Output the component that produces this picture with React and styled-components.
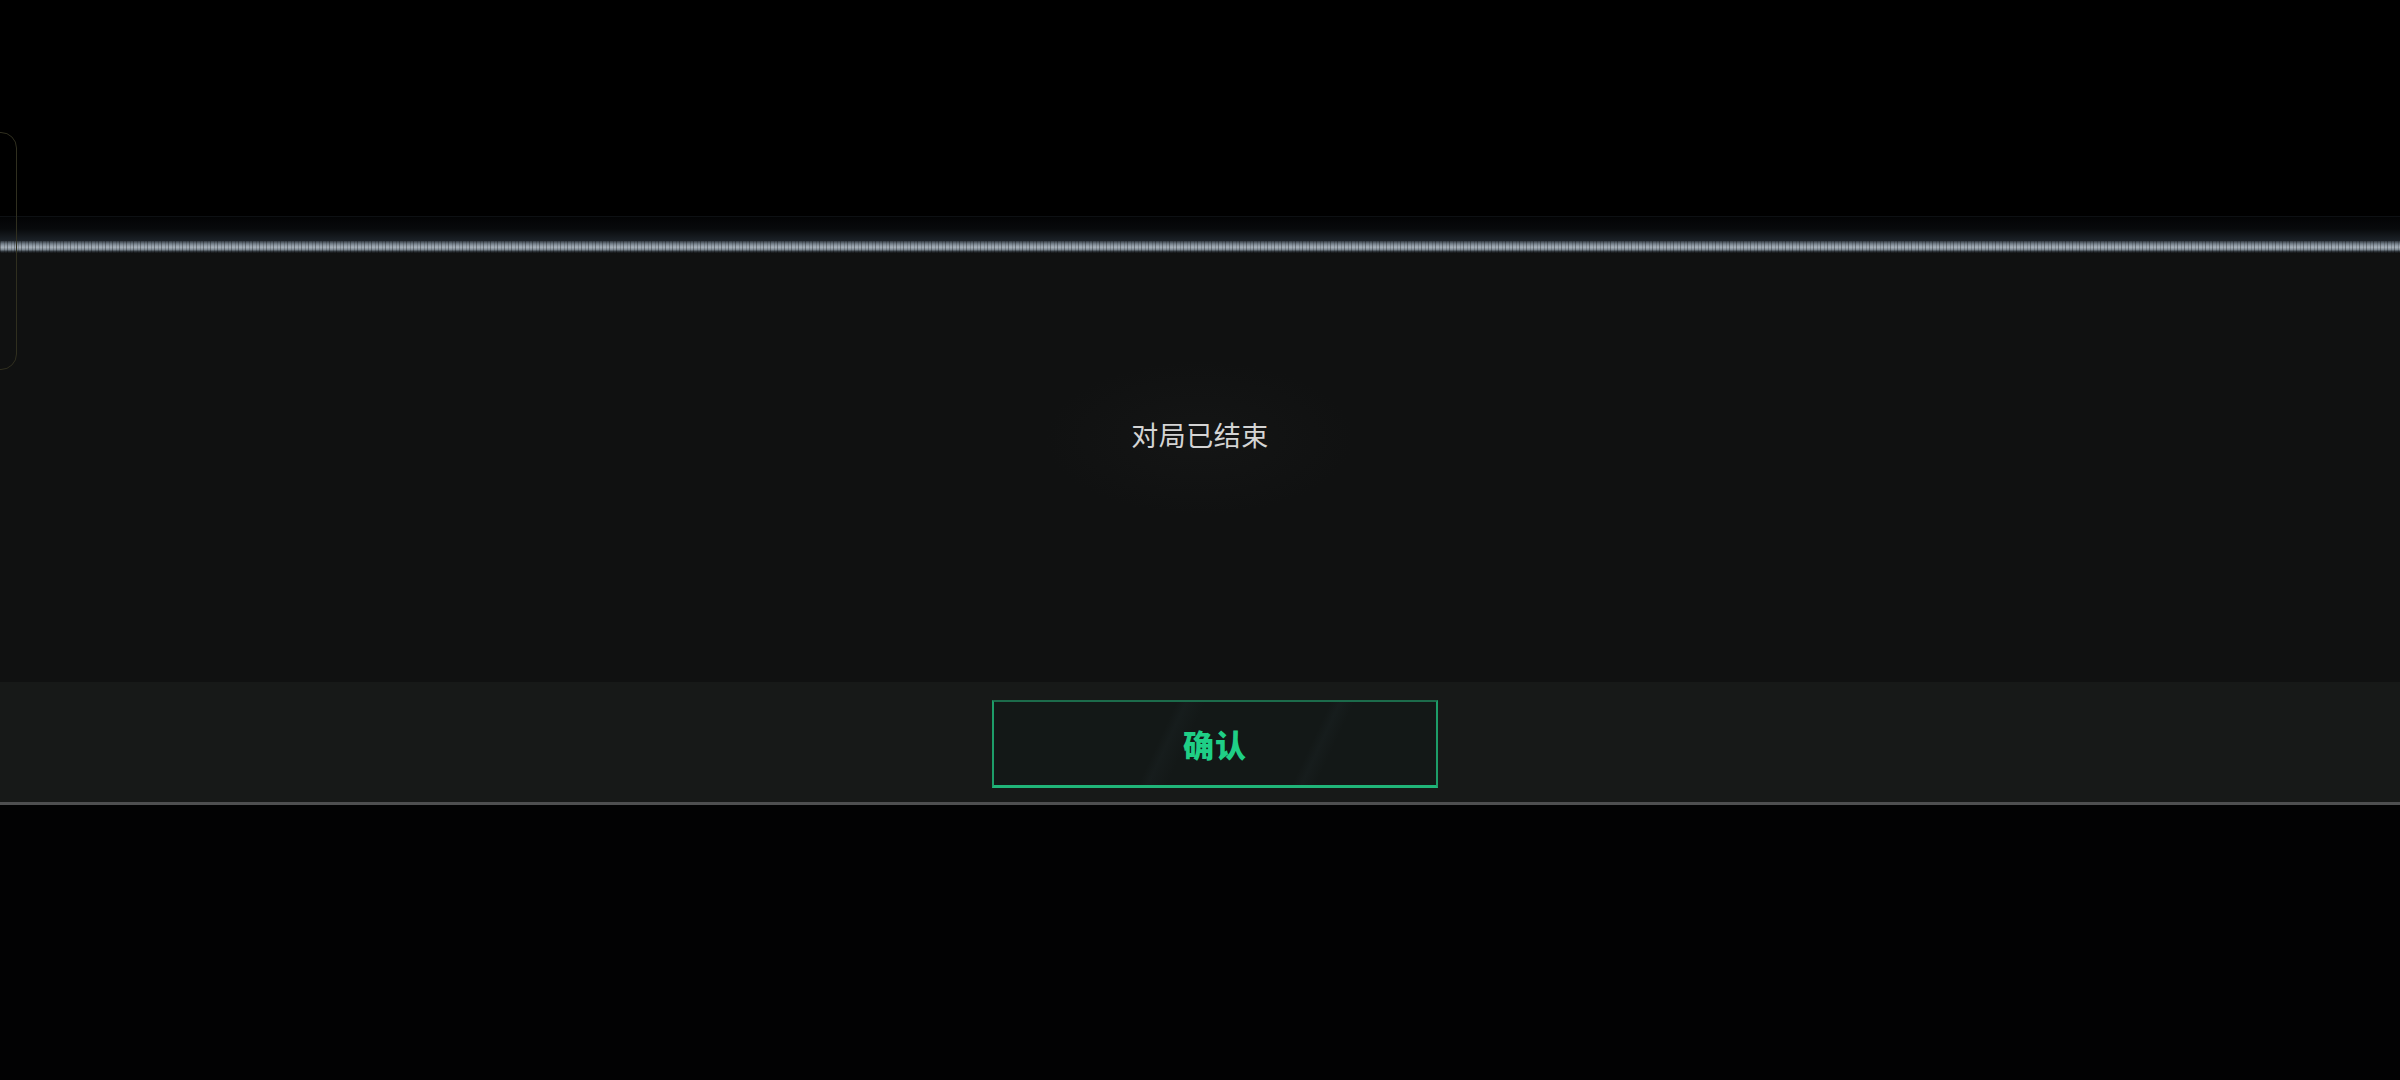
import React from 'react'
import styled, { createGlobalStyle } from 'styled-components'

const GlobalStyle = createGlobalStyle`
  html, body {
    margin: 0;
    padding: 0;
    background: #000;
  }
  body {
    font-family: "Noto Sans CJK SC", "Noto Sans", sans-serif;
  }
`

const Screen = styled.div`
  position: relative;
  width: 2400px;
  height: 1080px;
  overflow: hidden;
  background: #000;
  display: flex;
  flex-direction: column;
`

const TopSpace = styled.div`
  height: 216px;
  background: #000;
`

const HeaderFade = styled.div`
  height: 24px;
  border-top: 1px solid #0d1013;
  background: linear-gradient(180deg, #030405 0%, #080a0c 50%, #1c2228 100%);
`

const Separator = styled.div`
  height: 12px;
  background:
    repeating-linear-gradient(90deg, rgba(0, 0, 0, 0.3) 0 1px, transparent 1px 4px, rgba(0, 0, 0, 0.18) 4px 5px, transparent 5px 7px),
    linear-gradient(180deg, #333a41 0%, #6f7a84 22%, #99a4ae 42%, #a4aeb7 55%, #7b8690 72%, #2c3237 88%, #121314 100%);
`

const Body = styled.div`
  height: 429px;
  background: radial-gradient(ellipse 220px 110px at 50% 185px, #141515 0%, #101111 70%), #101111;
  display: flex;
  justify-content: center;
  padding-top: 162px;
  box-sizing: border-box;
`

const Message = styled.div`
  font-size: 27px;
  line-height: 40px;
  color: #d4d4d4;
  letter-spacing: 0.5px;
`

const Footer = styled.div`
  height: 123px;
  box-sizing: border-box;
  background: #171918;
  border-bottom: 3px solid #4e4f50;
  display: flex;
  justify-content: center;
  align-items: flex-start;
  padding-top: 18px;
`

const ConfirmButton = styled.button`
  margin-left: 30px;
  width: 446px;
  height: 88px;
  box-sizing: border-box;
  border: 2px solid #1d9d69;
  border-top-color: #1c6b4b;
  border-bottom: 3px solid #20b579;
  background:
    linear-gradient(115deg, transparent 0 38%, rgba(60, 80, 90, 0.08) 40%, transparent 44% 70%, rgba(60, 80, 90, 0.08) 72%, transparent 75%),
    #131817;
  color: #1fcf86;
  font-family: "Noto Sans CJK SC", "Noto Sans", sans-serif;
  font-size: 31px;
  font-weight: 900;
  letter-spacing: 1px;
  display: flex;
  align-items: center;
  justify-content: center;
  padding: 0;
  cursor: pointer;
`

const Bottom = styled.div`
  flex: 1;
  background: #020203;
`

const SideBracket = styled.div`
  position: absolute;
  left: -20px;
  top: 132px;
  width: 37px;
  height: 238px;
  border: 1.5px solid #302f1f;
  border-radius: 16px;
  box-sizing: border-box;
`

export default function App() {
  return (
    <>
      <GlobalStyle />
      <Screen>
        <TopSpace />
        <HeaderFade />
        <Separator />
        <Body>
          <Message>对局已结束</Message>
        </Body>
        <Footer>
          <ConfirmButton>确认</ConfirmButton>
        </Footer>
        <Bottom />
        <SideBracket />
      </Screen>
    </>
  )
}
